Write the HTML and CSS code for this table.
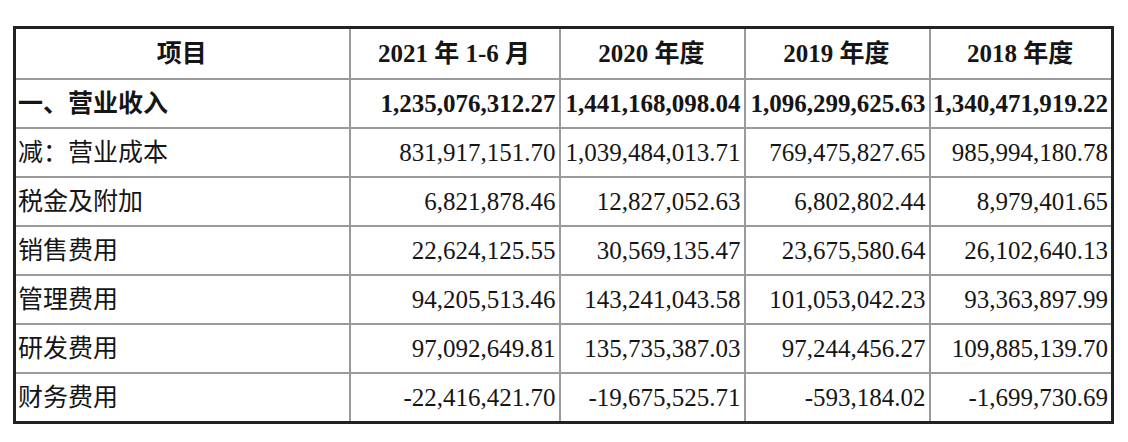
FILE: index.html
```html
<!DOCTYPE html>
<html lang="zh-CN">
<head>
<meta charset="utf-8">
<link rel="stylesheet" href="styles.css">
</head>
<body>
<table class="fin">
  <colgroup>
    <col class="c-item">
    <col class="c-a">
    <col class="c-b">
    <col class="c-b">
    <col class="c-c">
  </colgroup>
  <thead>
    <tr class="head">
      <th>项目</th>
      <th>2021 年 1-6 月</th>
      <th>2020 年度</th>
      <th>2019 年度</th>
      <th>2018 年度</th>
    </tr>
  </thead>
  <tbody>
    <tr class="strong">
      <td class="label">一、营业收入</td>
      <td class="num">1,235,076,312.27</td>
      <td class="num">1,441,168,098.04</td>
      <td class="num">1,096,299,625.63</td>
      <td class="num">1,340,471,919.22</td>
    </tr>
    <tr>
      <td class="label">减：营业成本</td>
      <td class="num">831,917,151.70</td>
      <td class="num">1,039,484,013.71</td>
      <td class="num">769,475,827.65</td>
      <td class="num">985,994,180.78</td>
    </tr>
    <tr>
      <td class="label">税金及附加</td>
      <td class="num">6,821,878.46</td>
      <td class="num">12,827,052.63</td>
      <td class="num">6,802,802.44</td>
      <td class="num">8,979,401.65</td>
    </tr>
    <tr>
      <td class="label">销售费用</td>
      <td class="num">22,624,125.55</td>
      <td class="num">30,569,135.47</td>
      <td class="num">23,675,580.64</td>
      <td class="num">26,102,640.13</td>
    </tr>
    <tr>
      <td class="label">管理费用</td>
      <td class="num">94,205,513.46</td>
      <td class="num">143,241,043.58</td>
      <td class="num">101,053,042.23</td>
      <td class="num">93,363,897.99</td>
    </tr>
    <tr>
      <td class="label">研发费用</td>
      <td class="num">97,092,649.81</td>
      <td class="num">135,735,387.03</td>
      <td class="num">97,244,456.27</td>
      <td class="num">109,885,139.70</td>
    </tr>
    <tr>
      <td class="label">财务费用</td>
      <td class="num">-22,416,421.70</td>
      <td class="num">-19,675,525.71</td>
      <td class="num">-593,184.02</td>
      <td class="num">-1,699,730.69</td>
    </tr>
  </tbody>
</table>
</body>
</html>
```

FILE: styles.css
```css
html, body {
  margin: 0;
  padding: 0;
  background: #fff;
}
body {
  padding: 26px 0 0 13px;
  font-family: "Liberation Serif", "Noto Sans CJK SC", serif;
  color: #151515;
}
.fin {
  border-collapse: collapse;
  table-layout: fixed;
  width: 1101px;
  border: 3px solid #222;
  font-size: 25px;
}
.c-item { width: 335px; }
.c-a { width: 210px; }
.c-b { width: 185px; }
.c-c { width: 183px; }
.fin th,
.fin td {
  border: 2px solid #9a9a9a;
  padding: 0 3px 0 2px;
  height: 47px;
  line-height: 28px;
  vertical-align: middle;
  white-space: nowrap;
}
.fin .head th {
  height: 49px;
  font-weight: bold;
  text-align: center;
}
.fin .label {
  text-align: left;
  padding-left: 2px;
}
.fin .num {
  text-align: right;
}
.fin .strong td {
  font-weight: bold;
}
```
